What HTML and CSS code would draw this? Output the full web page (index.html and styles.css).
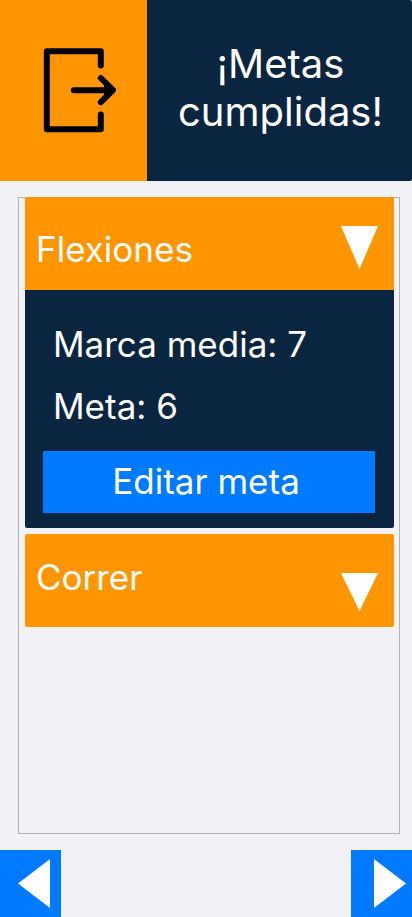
FILE: index.html
```html
<!DOCTYPE html>
<html lang="es">
<head>
<meta charset="utf-8">
<meta name="viewport" content="width=device-width, initial-scale=1">
<title>Metas cumplidas</title>
<link rel="stylesheet" href="styles.css">
</head>
<body>
<header class="header">
  <a class="exit" href="#" aria-label="Salir">
    <svg width="76" height="86" viewBox="0 0 76 86" fill="none" stroke="#000" stroke-width="6" stroke-linecap="round" stroke-linejoin="round" aria-hidden="true">
      <path d="M60.800 18.500V4.200H6.800V82.200H60.800V67.500"/>
      <path d="M33.800 43.200H72M60.800 31L73 43.200L60.800 55.200"/>
      <path d="M65 39L70 43.200L65 47.500Z" fill="#000" stroke-width="2"/>
    </svg>
  </a>
  <h1 class="title">¡Metas cumplidas!</h1>
</header>
<main class="goals">
  <section class="goal">
    <button class="goal-toggle" type="button" aria-expanded="true" aria-controls="flexiones">
      <span>Flexiones</span>
      <svg class="arrow" width="37" height="43" viewBox="0 0 37 43" aria-hidden="true"><path d="M0 0H37L18.500 43Z"/></svg>
    </button>
    <div class="details" id="flexiones">
      <p class="stat">Marca media: 7</p>
      <p class="stat">Meta: 6</p>
      <button class="edit" type="button">Editar meta</button>
    </div>
  </section>
  <section class="goal">
    <button class="goal-toggle goal-toggle-closed" type="button" aria-expanded="false">
      <span>Correr</span>
      <svg class="arrow" width="37" height="38" viewBox="0 0 37 38" aria-hidden="true"><path d="M0 0H37L18.500 38Z"/></svg>
    </button>
  </section>
</main>
<nav class="pager">
  <button class="page page-prev" type="button" aria-label="Anterior">
    <svg width="32" height="49" viewBox="0 0 32 49" aria-hidden="true"><path d="M32 0V49L0 24.500Z"/></svg>
  </button>
  <button class="page page-next" type="button" aria-label="Siguiente">
    <svg width="32" height="49" viewBox="0 0 32 49" aria-hidden="true"><path d="M0 0V49L32 24.500Z"/></svg>
  </button>
</nav>
</body>
</html>
```
FILE: styles.css
```css
* {
  box-sizing: border-box;
}

body {
  margin: 0;
  min-height: 100vh;
  display: flex;
  flex-direction: column;
  background: #f2f1f6;
  color: #fff;
  font: 400 35px/44px Inter, sans-serif;
}

button {
  border: 0;
  padding: 0;
  color: inherit;
  font: inherit;
  cursor: pointer;
}

svg {
  display: block;
  flex: none;
}

.header {
  display: flex;
  background: #0a2540;
  border-radius: 0 2px 2px 0;
}

.exit {
  flex: none;
  width: 147px;
  display: flex;
  align-items: flex-start;
  padding: 47px 0 0 40px;
  background: #ff9500;
}

.title {
  flex: 1;
  margin: 0;
  padding: 40px 26px 45px 28px;
  font-size: 40px;
  font-weight: 400;
  line-height: 48px;
  text-align: center;
}

.goals {
  flex: 1;
  display: flex;
  flex-direction: column;
  gap: 6px;
  margin: 16px 12px 16px 18px;
  padding: 0 5px 0 6px;
  border: 1px solid #b3b2b6;
}

.goal:first-child {
  margin-top: -1px;
}

.goal-toggle {
  width: 100%;
  height: 93px;
  display: flex;
  align-items: center;
  justify-content: space-between;
  padding: 10px 16px 0 11px;
  background: #ff9500;
  text-align: left;
}

.goal-toggle .arrow {
  margin-bottom: 2px;
}

.goal-toggle-closed {
  align-items: flex-start;
  padding-top: 21px;
  border-radius: 2px;
}

.goal-toggle-closed .arrow {
  margin: 18px 0 0;
}

.arrow,
.page svg {
  fill: #fff;
}

.details {
  padding: 32px 19px 15px 18px;
  background: #0a2540;
  border-radius: 0 0 2px 2px;
}

.stat {
  margin: 0 0 18px;
  padding-left: 10px;
}

.edit {
  display: block;
  width: 100%;
  height: 62px;
  margin-top: 23px;
  padding: 0 6px 2px 0;
  background: #007aff;
}

.pager {
  display: flex;
  justify-content: space-between;
}

.page {
  width: 61px;
  height: 67px;
  display: flex;
  align-items: center;
  background: #007aff;
}

.page-prev {
  padding-left: 18px;
}

.page-next {
  padding-left: 23px;
}
```
